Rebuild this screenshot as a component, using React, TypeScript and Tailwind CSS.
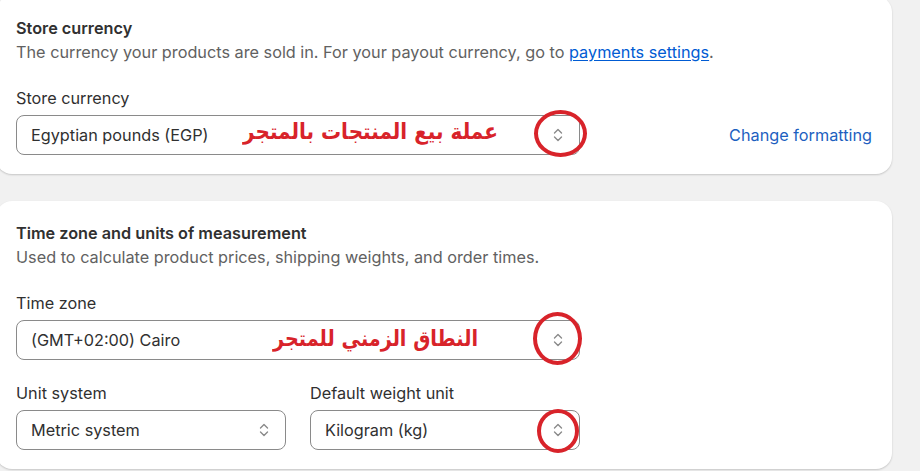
function SelectIcon() {
  return (
    <svg width="10" height="16" viewBox="0 0 10 16" fill="none" className="shrink-0">
      <path d="M1.5 6 L5 2.5 L8.5 6" stroke="#8a8a8a" strokeWidth="1.4" strokeLinecap="round" strokeLinejoin="round" />
      <path d="M1.5 10 L5 13.5 L8.5 10" stroke="#8a8a8a" strokeWidth="1.4" strokeLinecap="round" strokeLinejoin="round" />
    </svg>
  )
}

function Select({ value, className = "" }: { value: string; className?: string }) {
  return (
    <div
      className={`h-10 flex items-center justify-between rounded-lg border border-[#8a8a8a] bg-white pl-[14px] pr-[16px] text-[16.25px] text-[#303030] ${className}`}
    >
      <span>{value}</span>
      <SelectIcon />
    </div>
  )
}

function Field({ label, value, className = "" }: { label: string; value: string; className?: string }) {
  return (
    <div className={`flex flex-col gap-[5px] ${className}`}>
      <label className="text-[16.25px] leading-6 text-[#303030]">{label}</label>
      <Select value={value} />
    </div>
  )
}

function Ring({ className }: { className: string }) {
  return <div className={`absolute rounded-[50%] border-[4px] border-[#d8232a] ${className}`} />
}

function Note({ text, className }: { text: string; className: string }) {
  return (
    <div
      dir="rtl"
      className={`absolute origin-left text-[#d8232a] font-bold leading-8 whitespace-nowrap ${className}`}
      style={{ fontFamily: '"DejaVu Sans", sans-serif' }}
    >
      {text}
    </div>
  )
}

export default function App() {
  return (
    <div className="relative w-[920px] h-[471px] overflow-hidden bg-[#f1f1f1] font-['Inter',sans-serif]">
      <div className="-mt-1 -ml-1 w-[896px] flex flex-col gap-[27px]">
        {/* store currency */}
        <section className="bg-white rounded-2xl shadow-[0_1px_2px_rgba(0,0,0,0.18)] px-5 pt-5 pb-[19px] flex flex-col gap-[22px]">
          <div>
            <h2 className="text-[16.25px] leading-6 font-semibold text-[#303030]">Store currency</h2>
            <p className="text-[16.25px] leading-6 text-[#616161]">
              The currency your products are sold in. For your payout currency, go to{" "}
              <a className="text-[#005bd3] underline underline-offset-2">payments settings</a>.
            </p>
          </div>
          <div className="flex items-end justify-between">
            <Field label="Store currency" value="Egyptian pounds (EGP)" className="w-[564px]" />
            <a className="h-10 flex items-center text-[16.25px] text-[#1d5fc0]">Change formatting</a>
          </div>
        </section>

        {/* time zone and units */}
        <section className="bg-white rounded-2xl shadow-[0_1px_2px_rgba(0,0,0,0.18)] px-5 pt-5 pb-[19px] flex flex-col gap-[22px]">
          <div>
            <h2 className="text-[16.25px] leading-6 font-semibold text-[#303030]">Time zone and units of measurement</h2>
            <p className="text-[16.25px] leading-6 text-[#616161]">
              Used to calculate product prices, shipping weights, and order times.
            </p>
          </div>
          <div className="w-[564px] flex flex-col gap-[21px]">
            <Field label="Time zone" value="(GMT+02:00) Cairo" />
            <div className="grid grid-cols-2 gap-6">
              <Field label="Unit system" value="Metric system" />
              <Field label="Default weight unit" value="Kilogram (kg)" />
            </div>
          </div>
        </section>
      </div>

      {/* annotations */}
      <Note text="عملة بيع المنتجات بالمتجر" className="left-[243px] top-[116px] text-[22px] scale-x-[0.91]" />
      <Note text="النطاق الزمني للمتجر" className="left-[273px] top-[323px] text-[22px] scale-x-[0.875]" />
      <Ring className="left-[534px] top-[110px] w-[53px] h-[47px]" />
      <Ring className="left-[533px] top-[312px] w-[49px] h-[53px]" />
      <Ring className="left-[537px] top-[409px] w-[42px] h-[44px]" />
    </div>
  )
}
